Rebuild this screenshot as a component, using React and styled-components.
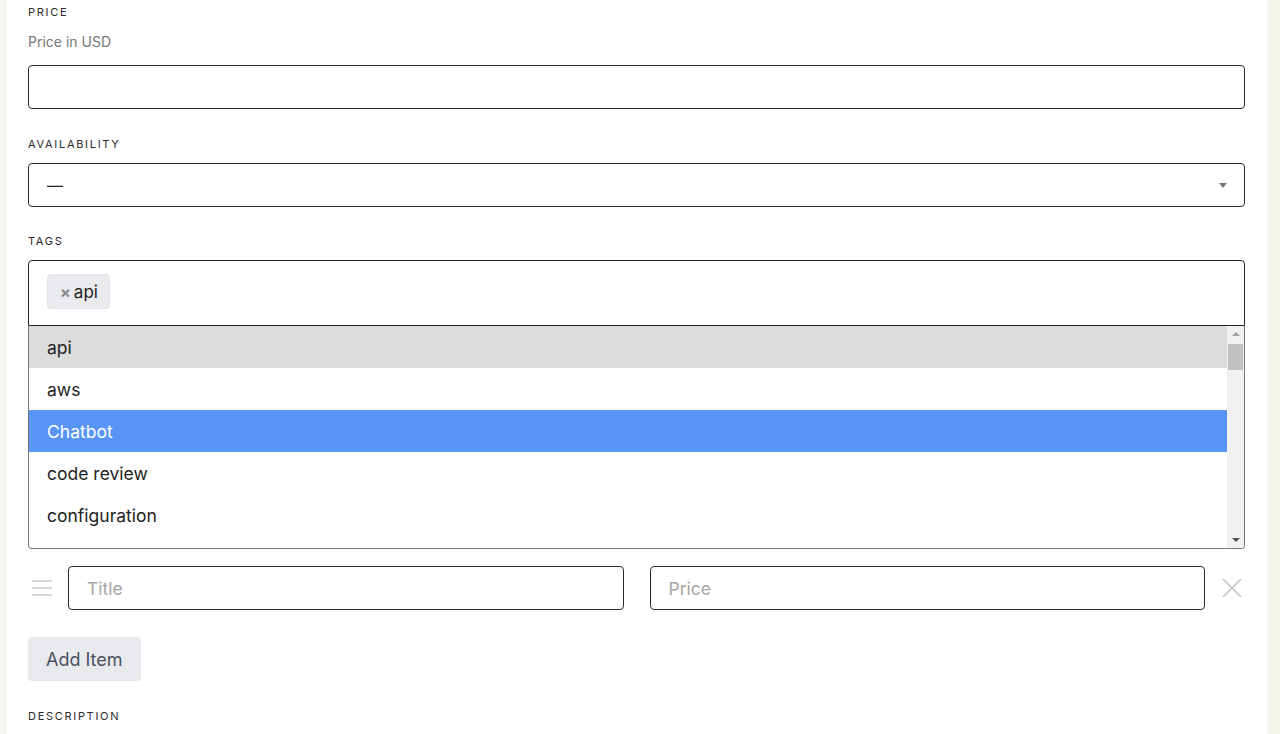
import React from "react";
import styled, { createGlobalStyle } from "styled-components";

const GlobalStyle = createGlobalStyle`
  html, body {
    margin: 0;
    padding: 0;
    background: #f7f6ee;
    font-family: Inter, "Liberation Sans", sans-serif;
    color: #222;
  }
`;

const Page = styled.div`
  display: flex;
  min-height: 734px;
  padding-left: 7px;
`;

const Panel = styled.div`
  width: 1260px;
  background: #fff;
  padding: 4px 22px 0 21px;
  box-sizing: border-box;
  display: flex;
  flex-direction: column;
`;

const Field = styled.div`
  display: flex;
  flex-direction: column;
  margin-bottom: ${(p) => p.$gap ?? 26}px;
`;

const Label = styled.div`
  font-size: 11px;
  line-height: 16px;
  letter-spacing: 1.7px;
  text-transform: uppercase;
  color: #2a2a2a;
  font-weight: 400;
  margin-bottom: 11px;
`;

const Help = styled.div`
  font-size: 14px;
  line-height: 20px;
  color: #777;
  margin-top: 1px;
  margin-bottom: 13px;
`;

const Input = styled.input`
  box-sizing: border-box;
  height: 44px;
  width: 100%;
  border: 1px solid #2b2b2b;
  border-radius: 4px;
  padding: 0 18px;
  font-family: inherit;
  font-size: 17.5px;
  color: #222;
  background: #fff;
  outline: none;
  &::placeholder {
    color: #a6a6a6;
  }
`;

const SelectBox = styled.div`
  box-sizing: border-box;
  height: 44px;
  border: 1px solid #2b2b2b;
  border-radius: 4px;
  padding: 0 17px 0 18px;
  display: flex;
  align-items: center;
  justify-content: space-between;
  font-size: 16px;
`;

const Caret = styled.span`
  width: 0;
  height: 0;
  border-left: 4px solid transparent;
  border-right: 4px solid transparent;
  border-top: 5px solid #777;
`;

const TagsWrap = styled.div`
  display: flex;
  flex-direction: column;
`;

const TagsBox = styled.div`
  box-sizing: border-box;
  height: 66px;
  border: 1px solid #222;
  border-radius: 4px 4px 0 0;
  padding: 13px 18px;
  display: flex;
  align-items: flex-start;
`;

const Chip = styled.span`
  display: inline-flex;
  align-items: center;
  gap: 3px;
  height: 35px;
  box-sizing: border-box;
  padding: 0 11px 0 12px;
  background: #e9eaed;
  border: 1px solid #e2e3e6;
  border-radius: 4px;
  font-size: 17px;
  color: #222;
`;

const ChipX = styled.span`
  color: #8a8a8a;
  font-size: 16px;
  font-weight: 700;
`;

const ListBox = styled.div`
  box-sizing: border-box;
  height: 223px;
  border: 1px solid #777;
  border-top: none;
  border-radius: 0 0 4px 4px;
  display: flex;
  overflow: hidden;
`;

const Options = styled.div`
  flex: 1;
  overflow: hidden;
`;

const Option = styled.div`
  height: 42px;
  display: flex;
  align-items: center;
  padding-left: 18px;
  font-size: 17.5px;
  background: ${(p) => (p.$active ? "#5995f6" : p.$selected ? "#dcdcdc" : "#fff")};
  color: ${(p) => (p.$active ? "#fff" : "#222")};
`;

const Scrollbar = styled.div`
  width: 17px;
  background: #f1f1f1;
  display: flex;
  flex-direction: column;
  align-items: center;
`;

const Arrow = styled.span`
  width: 0;
  height: 0;
  margin: ${(p) => (p.$down ? "auto 0 6px" : "6px 0 0")};
  border-left: 4px solid transparent;
  border-right: 4px solid transparent;
  ${(p) => (p.$down ? "border-top: 4px solid #505050;" : "border-bottom: 4px solid #a3a3a3;")}
`;

const Thumb = styled.div`
  width: 15px;
  height: 26px;
  margin-top: 8px;
  background: #c1c1c1;
`;

const ItemRow = styled.div`
  display: flex;
  align-items: center;
  margin-top: 17px;
  margin-bottom: 27px;
`;

const Handle = styled.div`
  width: 28px;
  margin-right: 12px;
  display: flex;
  justify-content: center;
  color: #c9cbd0;
`;

const ItemInputs = styled.div`
  flex: 1;
  display: flex;
  gap: 26px;
`;

const RemoveBtn = styled.button`
  width: 26px;
  margin-left: 14px;
  padding: 0;
  border: none;
  background: none;
  display: flex;
  justify-content: center;
  color: #bdbdbd;
`;

const AddButton = styled.button`
  align-self: flex-start;
  height: 44px;
  padding: 0 18px;
  border: none;
  border-radius: 4px;
  background: #e9eaed;
  color: #4b5160;
  font-family: inherit;
  font-size: 18px;
  margin-bottom: 27px;
`;

const tags = ["api", "aws", "Chatbot", "code review", "configuration"];

export default function App() {
  return (
    <>
      <GlobalStyle />
      <Page>
        <Panel>
          <Field $gap={27}>
            <Label>Price</Label>
            <Help>Price in USD</Help>
            <Input />
          </Field>
          <Field>
            <Label>Availability</Label>
            <SelectBox>
              <span>—</span>
              <Caret />
            </SelectBox>
          </Field>
          <Field $gap={0}>
            <Label>Tags</Label>
            <TagsWrap>
              <TagsBox>
                <Chip>
                  <ChipX>×</ChipX>api
                </Chip>
              </TagsBox>
              <ListBox>
                <Options>
                  {tags.map((t) => (
                    <Option key={t} $selected={t === "api"} $active={t === "Chatbot"}>
                      {t}
                    </Option>
                  ))}
                </Options>
                <Scrollbar>
                  <Arrow />
                  <Thumb />
                  <Arrow $down />
                </Scrollbar>
              </ListBox>
            </TagsWrap>
          </Field>
          <ItemRow>
            <Handle>
              <svg width="20" height="16" viewBox="0 0 20 16" fill="none" stroke="currentColor" strokeWidth="1.5">
                <path d="M0 1h20M0 8h20M0 15h20" />
              </svg>
            </Handle>
            <ItemInputs>
              <Input placeholder="Title" />
              <Input placeholder="Price" />
            </ItemInputs>
            <RemoveBtn>
              <svg width="20" height="20" viewBox="0 0 20 20" fill="none" stroke="currentColor" strokeWidth="1.4">
                <path d="M1 1l18 18M19 1L1 19" />
              </svg>
            </RemoveBtn>
          </ItemRow>
          <AddButton>Add Item</AddButton>
          <Label>Description</Label>
        </Panel>
      </Page>
    </>
  );
}
